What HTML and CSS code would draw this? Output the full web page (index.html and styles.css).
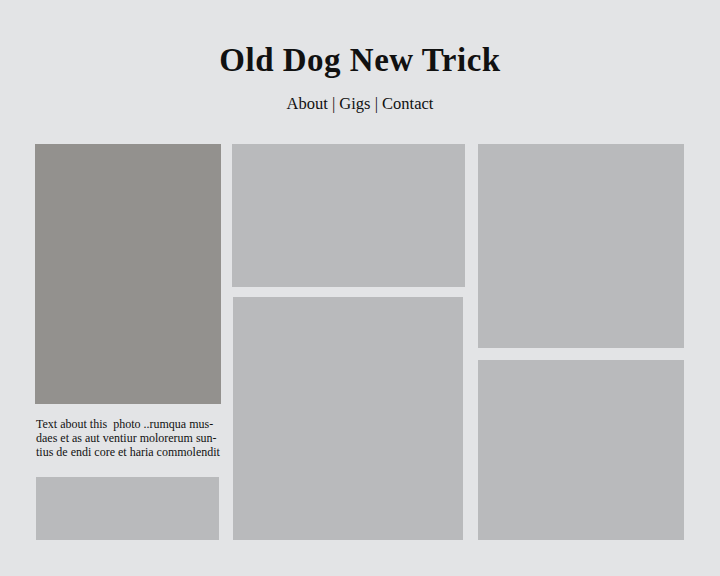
FILE: index.html
```html
<!DOCTYPE html>
<html>
<head>
  <meta charset="utf-8">
  <title>Old Dog New Trick</title>
  <link rel="stylesheet" href="styles.css">
</head>
<body>
	<div class="header">
		<h1>Old Dog New Trick</h1>
		<div class="nav">About | Gigs | Contact</div>
	</div>
	<div class="board">
		<div class="col col-left">
			<div class="box photo"></div>
			<p class="caption">Text about this&nbsp; photo ..rumqua mus-<br>daes et as aut ventiur molorerum sun-<br>tius de endi core et haria commolendit</p>
			<div class="box small"></div>
		</div>
		<div class="col col-mid">
			<div class="box mid-top"></div>
			<div class="box mid-bottom"></div>
		</div>
		<div class="col col-right">
			<div class="box right-top"></div>
			<div class="box right-bottom"></div>
		</div>
	</div>
</body>
</html>
```

FILE: styles.css
```css
	body{
		margin:0;
		background:#e3e4e6;
		font-family:"Liberation Serif", serif;
		color:#111;
	}
	.header{
		text-align:center;
		padding-top:40px;
	}
	h1{
		margin:0;
		font-size:33px;
		line-height:40px;
		letter-spacing:0.5px;
		font-weight:bold;
	}
	.nav{
		margin-top:14px;
		font-size:16.5px;
		line-height:20px;
	}
	.board{
		display:flex;
		align-items:stretch;
		height:396px;
		margin-top:30px;
		padding-left:35px;
	}
	.col{
		display:flex;
		flex-direction:column;
	}
	.box{
		background:#b9babc;
	}
	.col-left{
		width:186px;
	}
	.photo{
		height:260px;
		background:#93918e;
	}
	.caption{
		margin:13px 0 0 1px;
		font-size:12px;
		line-height:14px;
		white-space:nowrap;
	}
	.small{
		margin:18px 2px 0 1px;
		flex:1;
	}
	.col-mid{
		width:233px;
		margin-left:11px;
	}
	.mid-top{
		height:143px;
	}
	.mid-bottom{
		flex:1;
		margin:10px 2px 0 1px;
	}
	.col-right{
		width:206px;
		margin-left:13px;
	}
	.right-top{
		height:204px;
	}
	.right-bottom{
		flex:1;
		margin-top:12px;
	}
```
